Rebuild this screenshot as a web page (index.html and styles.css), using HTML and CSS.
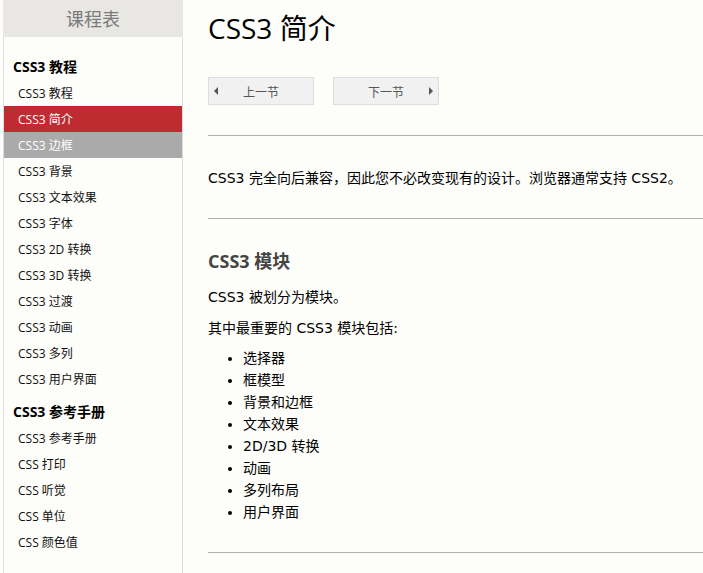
FILE: index.html
```html
<!DOCTYPE html>
<html lang="zh-CN">
<head>
<meta charset="utf-8">
<title>CSS3 简介</title>
<link rel="stylesheet" href="styles.css">
</head>
<body>
<div class="page">
  <nav class="sidebar">
    <div class="side-title">课程表</div>
    <div class="side-group side-group-first">
      <div class="side-head">CSS3 教程</div>
      <a class="side-item">CSS3 教程</a>
      <a class="side-item current">CSS3 简介</a>
      <a class="side-item hover">CSS3 边框</a>
      <a class="side-item">CSS3 背景</a>
      <a class="side-item">CSS3 文本效果</a>
      <a class="side-item">CSS3 字体</a>
      <a class="side-item">CSS3 2D 转换</a>
      <a class="side-item">CSS3 3D 转换</a>
      <a class="side-item">CSS3 过渡</a>
      <a class="side-item">CSS3 动画</a>
      <a class="side-item">CSS3 多列</a>
      <a class="side-item">CSS3 用户界面</a>
    </div>
    <div class="side-group">
      <div class="side-head">CSS3 参考手册</div>
      <a class="side-item">CSS3 参考手册</a>
      <a class="side-item">CSS 打印</a>
      <a class="side-item">CSS 听觉</a>
      <a class="side-item">CSS 单位</a>
      <a class="side-item">CSS 颜色值</a>
    </div>
  </nav>
  <main class="content">
    <h1 class="title">CSS3 简介</h1>
    <div class="pager">
      <a class="pager-btn prev"><span class="arrow arrow-left"></span><span class="pager-label">上一节</span></a>
      <a class="pager-btn next"><span class="pager-label">下一节</span><span class="arrow arrow-right"></span></a>
    </div>
    <hr class="rule rule-first">
    <p class="text intro">CSS3 完全向后兼容，因此您不必改变现有的设计。浏览器通常支持 CSS2。</p>
    <hr class="rule rule-second">
    <h2 class="subtitle">CSS3 模块</h2>
    <p class="text p1">CSS3 被划分为模块。</p>
    <p class="text p2">其中最重要的 CSS3 模块包括:</p>
    <ul class="modules">
      <li>选择器</li>
      <li>框模型</li>
      <li>背景和边框</li>
      <li>文本效果</li>
      <li>2D/3D 转换</li>
      <li>动画</li>
      <li>多列布局</li>
      <li>用户界面</li>
    </ul>
    <hr class="rule rule-third">
  </main>
</div>
</body>
</html>
```

FILE: styles.css
```css
html, body {
  margin: 0;
  padding: 0;
  background: #fdfdf9;
}

body {
  font-family: "DejaVu Sans", "Noto Sans CJK SC", sans-serif;
  color: #000;
  overflow: hidden;
}

.page {
  display: flex;
  align-items: stretch;
  min-height: 573px;
}

.sidebar {
  margin-left: 3px;
  width: 178px;
  border-left: 1px solid #dcdcdc;
  border-right: 1px solid #dcdcdc;
  font-family: "Open Sans", "Noto Sans CJK SC", sans-serif;
  flex-shrink: 0;
}

.side-title {
  height: 37px;
  line-height: 37px;
  margin: 0 -1px;
  background: #e8e7e3;
  color: #7a7a7a;
  font-size: 18px;
  text-align: center;
  font-family: "Noto Sans CJK SC", sans-serif;
}

.side-group {
  display: flex;
  flex-direction: column;
}

.side-group-first {
  margin-top: 10px;
}

.side-head {
  padding: 7px 0 0 9px;
  height: 26px;
  line-height: 26px;
  font-size: 14px;
  font-weight: bold;
  color: #000;
}

.side-item {
  display: block;
  height: 26px;
  line-height: 27px;
  padding-left: 14px;
  font-size: 12px;
  color: #111;
}

.side-item.current {
  background: #be2b31;
  color: #fff;
}

.side-item.hover {
  background: #aaaaaa;
  color: #fff;
}

.content {
  flex: 1;
  margin-left: 25px;
  padding-top: 8px;
}

.title {
  margin: 0;
  height: 40px;
  line-height: 40px;
  font-size: 28px;
  font-weight: normal;
  font-family: "Open Sans", "Noto Sans CJK SC", sans-serif;
  color: #000;
}

.pager {
  display: flex;
  gap: 19px;
  margin-top: 29px;
}

.pager-btn {
  box-sizing: border-box;
  width: 106px;
  height: 28px;
  background: #f1f1f1;
  border: 1px solid #dddddd;
  display: flex;
  align-items: center;
  padding: 0 5px;
  font-size: 12px;
  color: #555;
  font-family: "Noto Sans CJK SC", sans-serif;
}

.pager-label {
  flex: 1;
  text-align: center;
}

.prev .pager-label {
  padding-right: 4px;
}

.next .pager-label {
  padding-left: 4px;
}

.arrow {
  width: 0;
  height: 0;
  border-top: 4px solid transparent;
  border-bottom: 4px solid transparent;
}

.arrow-left {
  border-right: 4px solid #555;
}

.arrow-right {
  border-left: 4px solid #555;
}

.rule {
  border: 0;
  height: 1px;
  background: #aeaeaa;
  margin: 0;
}

.rule-first {
  margin-top: 30px;
}

.text {
  margin: 0;
  font-size: 14px;
  line-height: 22px;
  height: 22px;
}

.intro {
  margin-top: 31px;
  margin-bottom: 29px;
}

.subtitle {
  margin: 29px 0 0;
  height: 26px;
  line-height: 26px;
  font-size: 18px;
  font-weight: bold;
  color: #444;
  font-family: "Open Sans", "Noto Sans CJK SC", sans-serif;
}

.p1 {
  margin-top: 12px;
}

.p2 {
  margin-top: 9px;
}

.modules {
  margin: 8px 0 0;
  padding-left: 35px;
  font-size: 14px;
  line-height: 22px;
}

.rule-third {
  margin-top: 29px;
}
```
